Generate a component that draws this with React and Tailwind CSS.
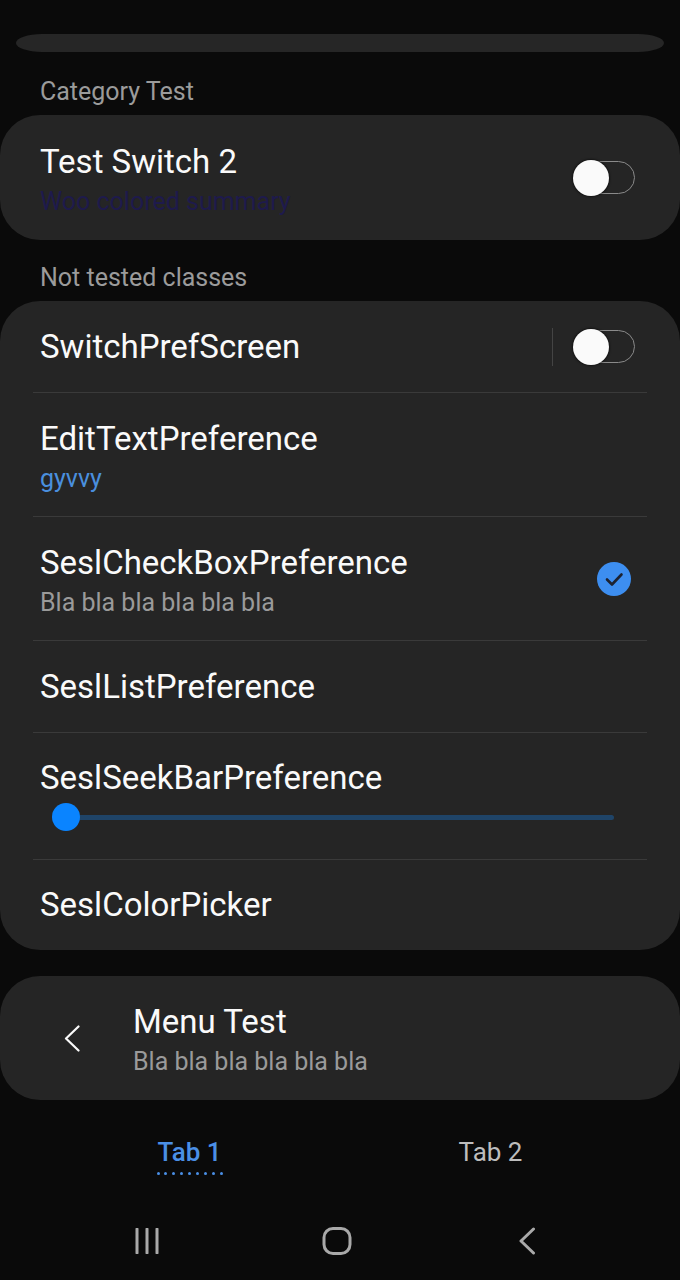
import React from "react";

const Toggle = () => (
  <div className="relative w-[62px] h-[36px] flex items-center">
    <div className="absolute right-0 w-[52px] h-[33px] rounded-full border-[1.5px] border-[#8a8a8a]" />
    <div className="absolute left-0 w-[36px] h-[36px] rounded-full bg-[#fafafa] shadow-[0_0_2px_1px_rgba(0,0,0,0.5)]" />
  </div>
);

const CheckCircle = () => (
  <svg width="34" height="34" viewBox="0 0 34 34">
    <circle cx="17" cy="17" r="17" fill="#3d8ef0" />
    <path d="M10 17.5 L15 22.5 L24.5 12.5" fill="none" stroke="#1d2230" strokeWidth="2.6" strokeLinecap="round" strokeLinejoin="round" />
  </svg>
);

const App = () => {
  return (
    <div
      className="w-[680px] h-[1280px] bg-[#0a0a0a] flex flex-col overflow-hidden"
      style={{ fontFamily: "Roboto, 'Noto Sans', sans-serif" }}
    >
      <div className="pt-[34px] px-4">
        <div className="h-[18px] bg-[#262626] rounded-[26px/9px]" />
      </div>

      <div className="h-[63px] pt-[16px] flex items-center pl-10 text-[25px] text-[#9b9b9b]">
        Category Test
      </div>

      {/* card 1 */}
      <div className="bg-[#252525] rounded-[40px] h-[125px] px-10 flex items-center justify-between">
        <div className="mt-[8px]">
          <div className="text-[33px] leading-[40px] text-[#fafafa]">Test Switch 2</div>
          <div className="text-[25px] leading-[40px] text-[#1e1a4c]">Woo colored summary</div>
        </div>
        <div className="mr-[5px]">
          <Toggle />
        </div>
      </div>

      <div className="h-[61px] pt-[14px] flex items-center pl-10 text-[25px] text-[#9b9b9b]">
        Not tested classes
      </div>

      {/* card 2 */}
      <div className="bg-[#252525] rounded-[40px] px-[33px]">
        <div className="h-[92px] border-b border-[#3a3a3a] flex items-center justify-between pl-[7px] pr-[12px]">
          <div className="text-[33px] leading-[40px] text-[#fafafa]">SwitchPrefScreen</div>
          <div className="flex items-center">
            <div className="w-px h-[38px] bg-[#444444] mr-[20px]" />
            <Toggle />
          </div>
        </div>

        <div className="h-[124px] border-b border-[#3a3a3a] flex items-center pl-[7px]">
          <div className="mt-[8px]">
            <div className="text-[33px] leading-[40px] text-[#fafafa]">EditTextPreference</div>
            <div className="text-[25px] leading-[40px] text-[#4a8fde]">gyvvy</div>
          </div>
        </div>

        <div className="h-[124px] border-b border-[#3a3a3a] flex items-center justify-between pl-[7px] pr-[16px]">
          <div className="mt-[8px]">
            <div className="text-[33px] leading-[40px] text-[#fafafa]">SeslCheckBoxPreference</div>
            <div className="text-[25px] leading-[40px] text-[#9a9a9a]">Bla bla bla bla bla bla</div>
          </div>
          <CheckCircle />
        </div>

        <div className="h-[92px] border-b border-[#3a3a3a] flex items-center pl-[7px]">
          <div className="text-[33px] leading-[40px] text-[#fafafa]">SeslListPreference</div>
        </div>

        <div className="h-[127px] border-b border-[#3a3a3a] pt-[25px] pl-[7px]">
          <div className="text-[33px] leading-[40px] text-[#fafafa]">SeslSeekBarPreference</div>
          <div className="relative h-[28px] mt-[5px] ml-[12px] mr-[33px] flex items-center">
            <div className="absolute left-[14px] right-0 h-[5px] rounded-full bg-[#1f4468]" />
            <div className="relative w-[28px] h-[28px] rounded-full bg-[#0a84ff]" />
          </div>
        </div>

        <div className="h-[90px] flex items-center pl-[7px]">
          <div className="text-[33px] leading-[40px] text-[#fafafa]">SeslColorPicker</div>
        </div>
      </div>

      {/* menu card */}
      <div className="mt-[26px] bg-[#252525] rounded-[40px] h-[124px] flex items-center">
        <div className="w-[133px] pl-[64px] flex items-center">
          <svg width="16" height="27" viewBox="0 0 16 27">
            <path d="M14.5 1.5 L2 13.5 L14.5 25.5" fill="none" stroke="#fafafa" strokeWidth="2.2" strokeLinecap="round" strokeLinejoin="round" />
          </svg>
        </div>
        <div className="mt-[8px]">
          <div className="text-[33px] leading-[40px] text-[#fafafa]">Menu Test</div>
          <div className="text-[25px] leading-[40px] text-[#9a9a9a]">Bla bla bla bla bla bla</div>
        </div>
      </div>

      {/* tabs */}
      <div className="mt-[34px] px-[39px] flex">
        <div className="flex-1 flex flex-col items-center">
          <div className="text-[26px] leading-[36px] font-medium text-[#4a8fe6]">Tab 1</div>
          <div className="mt-[2px] w-[66px] flex justify-between">
            {[0, 1, 2, 3, 4, 5, 6, 7, 8].map((i) => (
              <span key={i} className="w-[3px] h-[3px] rounded-full bg-[#4a8fe6]" />
            ))}
          </div>
        </div>
        <div className="flex-1 flex flex-col items-center">
          <div className="text-[26px] leading-[36px] text-[#bdbdbd]">Tab 2</div>
        </div>
      </div>

      {/* nav bar */}
      <div className="mt-[51px] pl-[52px] pr-[58px] grid grid-cols-3 items-center">
        <div className="flex justify-center">
          <svg width="26" height="26" viewBox="0 0 26 26">
            <path d="M3 1 V25 M13 1 V25 M23 1 V25" stroke="#a9a9a9" strokeWidth="3" strokeLinecap="round" />
          </svg>
        </div>
        <div className="flex justify-center">
          <svg width="30" height="30" viewBox="0 0 30 30">
            <rect x="2" y="2.5" width="26" height="25" rx="9" fill="none" stroke="#a9a9a9" strokeWidth="3" />
          </svg>
        </div>
        <div className="flex justify-center">
          <svg width="18" height="28" viewBox="0 0 18 28">
            <path d="M15.5 2 L3 14 L15.5 26" fill="none" stroke="#a9a9a9" strokeWidth="3" strokeLinecap="round" strokeLinejoin="round" />
          </svg>
        </div>
      </div>
    </div>
  );
};

export default App;
